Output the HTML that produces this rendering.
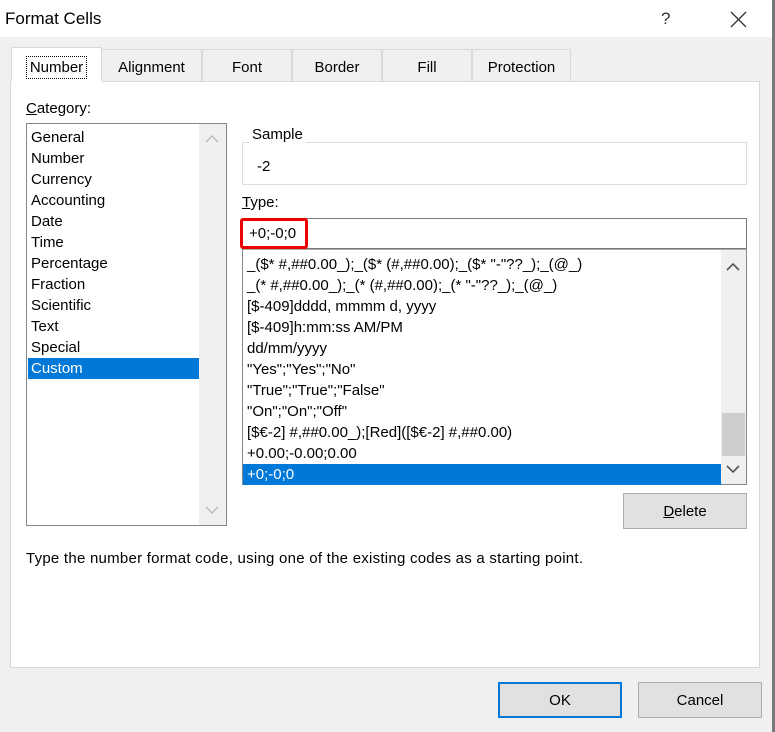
<!DOCTYPE html>
<html><head><style>
*{margin:0;padding:0;box-sizing:border-box}
body{width:775px;height:732px;background:#f0f0f0;font-family:"Liberation Sans",sans-serif;font-size:14.5px;color:#000;position:relative;overflow:hidden}
.a{position:absolute}
.title{left:0;top:0;width:775px;height:37px;background:#fff}
.tab{position:absolute;top:49px;height:32px;border:1px solid #d9d9d9;border-bottom:none;background:#f0f0f0;text-align:center;line-height:36px;font-size:15px}
.panel{left:10px;top:81px;width:750px;height:587px;background:#fff;border:1px solid #d9d9d9}
.list div{height:21px;line-height:21px;padding-left:4px;white-space:nowrap}
.btn{position:absolute;background:#e1e1e1;border:1px solid #adadad;text-align:center;font-size:15px}
</style></head><body>
<div class="a title"></div>
<div class="a" style="left:5px;top:9px;font-size:17px">Format Cells</div>
<div class="a" style="left:661px;top:9px;font-size:17px;color:#333">?</div>
<svg class="a" style="left:730px;top:11px" width="17" height="17"><path d="M1 1L16 16M16 1L1 16" stroke="#333" stroke-width="1.3"/></svg>
<div class="a" style="left:772px;top:0;width:3px;height:732px;background:#777"></div>
<div class="a panel"></div>
<div class="tab" style="left:101px;width:101px">Alignment</div>
<div class="tab" style="left:202px;width:90px">Font</div>
<div class="tab" style="left:292px;width:90px">Border</div>
<div class="tab" style="left:382px;width:90px">Fill</div>
<div class="tab" style="left:472px;width:99px">Protection</div>
<div class="tab" style="left:11px;top:47px;width:91px;height:35px;background:#fff;border-color:#d9d9d9;border-bottom:1px solid #fff;line-height:39px"><span style="outline:1px dotted #000;padding:2px 3px">Number</span></div>
<div class="a" style="left:26px;top:100px;font-size:15px"><u>C</u>ategory:</div>
<div class="a list" style="left:26px;top:123px;width:201px;height:403px;border:1px solid #828790;background:#fff;padding-top:3px;font-size:15px">
<div>General</div><div>Number</div><div>Currency</div><div>Accounting</div><div>Date</div><div>Time</div><div>Percentage</div><div>Fraction</div><div>Scientific</div><div>Text</div><div>Special</div><div style="background:#0078d7;color:#fff;width:172px;margin-left:1px;padding-left:3px">Custom</div>
</div>
<div class="a" style="left:199px;top:124px;width:27px;height:401px;background:#f0f0f0"></div>
<svg class="a" style="left:205px;top:134px" width="14" height="10"><path d="M1 8L7 2L13 8" stroke="#bbb" fill="none" stroke-width="1.5"/></svg>
<svg class="a" style="left:205px;top:505px" width="14" height="10"><path d="M1 2L7 8L13 2" stroke="#bbb" fill="none" stroke-width="1.5"/></svg>
<div class="a" style="left:242px;top:142px;width:505px;height:43px;border:1px solid #dcdcdc"></div>
<div class="a" style="left:249px;top:126px;background:#fff;padding:0 3px;font-size:15px">Sample</div>
<div class="a" style="left:257px;top:158px;font-size:15px">-2</div>
<div class="a" style="left:242px;top:194px;font-size:15px"><u>T</u>ype:</div>
<div class="a" style="left:242px;top:218px;width:505px;height:31px;border:1px solid #7a7a7a;background:#fff"></div>
<div class="a" style="left:240px;top:218px;width:68px;height:31px;border:3px solid #e00;border-radius:3px"></div>
<div class="a" style="left:249px;top:225px;font-size:15px">+0;-0;0</div>
<div class="a list" style="left:242px;top:249px;width:505px;height:236px;border:1px solid #828790;border-top:1px solid #aaa;background:#fff;padding-top:4px;font-size:15px">
<div>_($* #,##0.00_);_($* (#,##0.00);_($* "-"??_);_(@_)</div>
<div>_(* #,##0.00_);_(* (#,##0.00);_(* "-"??_);_(@_)</div>
<div>[$-409]dddd, mmmm d, yyyy</div>
<div>[$-409]h:mm:ss AM/PM</div>
<div>dd/mm/yyyy</div>
<div>"Yes";"Yes";"No"</div>
<div>"True";"True";"False"</div>
<div>"On";"On";"Off"</div>
<div>[$€-2] #,##0.00_);[Red]([$€-2] #,##0.00)</div>
<div>+0.00;-0.00;0.00</div>
<div style="background:#0078d7;color:#fff;width:478px">+0;-0;0</div>
</div>
<div class="a" style="left:721px;top:250px;width:25px;height:234px;background:#f0f0f0"></div>
<div class="a" style="left:722px;top:413px;width:23px;height:43px;background:#cdcdcd"></div>
<svg class="a" style="left:726px;top:262px" width="14" height="10"><path d="M1 8L7 2L13 8" stroke="#555" fill="none" stroke-width="1.6"/></svg>
<svg class="a" style="left:726px;top:464px" width="14" height="10"><path d="M1 2L7 8L13 2" stroke="#555" fill="none" stroke-width="1.6"/></svg>
<div class="btn" style="left:623px;top:493px;width:124px;height:36px;line-height:36px"><u>D</u>elete</div>
<div class="a" style="left:26px;top:550px;font-size:15px;letter-spacing:0.25px">Type the number format code, using one of the existing codes as a starting point.</div>
<div class="btn" style="left:498px;top:682px;width:124px;height:36px;line-height:34px;border:2px solid #0078d7">OK</div>
<div class="btn" style="left:638px;top:682px;width:124px;height:36px;line-height:36px">Cancel</div>
</body></html>
